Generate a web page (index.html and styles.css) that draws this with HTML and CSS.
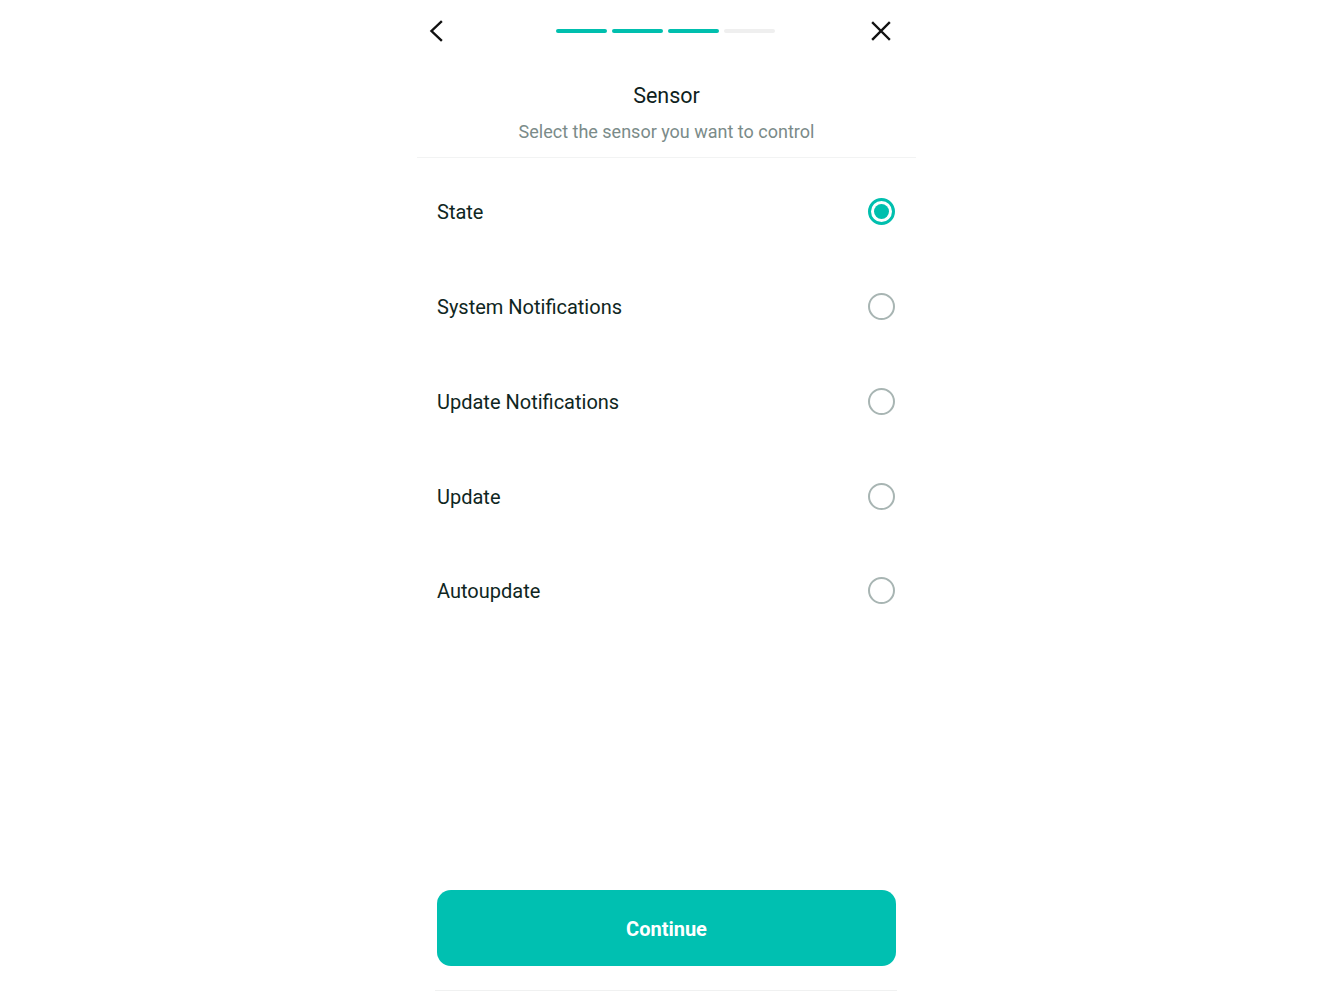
FILE: index.html
```html
<!DOCTYPE html>
<html lang="en">
<head>
<meta charset="utf-8">
<title>Sensor</title>
<link rel="stylesheet" href="styles.css">
</head>
<body>
<div class="screen">
  <header class="topbar">
    <button class="icon-btn" aria-label="Back">
      <svg width="24" height="24" viewBox="0 0 24 24"><path d="M13 3 L3.5 12 L13 21" fill="none" stroke="#111" stroke-width="2.4" stroke-linecap="square"/></svg>
    </button>
    <div class="progress">
      <span class="seg on"></span>
      <span class="seg on"></span>
      <span class="seg on"></span>
      <span class="seg"></span>
    </div>
    <button class="icon-btn" aria-label="Close">
      <svg width="24" height="24" viewBox="0 0 24 24"><path d="M4 4 L20 20 M20 4 L4 20" fill="none" stroke="#111" stroke-width="2.4" stroke-linecap="square"/></svg>
    </button>
  </header>

  <div class="heading">
    <h1 class="title">Sensor</h1>
    <p class="subtitle">Select the sensor you want to control</p>
  </div>

  <ul class="options">
    <li class="option"><span class="label">State</span><span class="radio checked"></span></li>
    <li class="option"><span class="label">System Notifications</span><span class="radio"></span></li>
    <li class="option"><span class="label">Update Notifications</span><span class="radio"></span></li>
    <li class="option"><span class="label">Update</span><span class="radio"></span></li>
    <li class="option"><span class="label">Autoupdate</span><span class="radio"></span></li>
  </ul>

  <footer class="footer">
    <button class="continue">Continue</button>
    <div class="bottom-line"></div>
  </footer>
</div>
</body>
</html>
```

FILE: styles.css
```css
* { box-sizing: border-box; }

html, body {
  margin: 0;
  padding: 0;
  background: #ffffff;
  font-family: Roboto, "Noto Sans", "Liberation Sans", sans-serif;
  color: #0f2622;
}

.screen {
  width: 499px;
  height: 1000px;
  margin: 0 auto;
  display: flex;
  flex-direction: column;
}

.topbar {
  height: 62px;
  padding: 0 23px 0 11px;
  display: flex;
  align-items: center;
  justify-content: space-between;
}

.icon-btn {
  width: 24px;
  height: 24px;
  padding: 0;
  border: 0;
  background: none;
  display: flex;
  align-items: center;
  justify-content: center;
}

.progress {
  display: flex;
  gap: 5px;
  margin-left: 10px;
}

.seg {
  width: 51px;
  height: 4px;
  border-radius: 2px;
  background: #efefef;
}

.seg.on { background: #00bfae; }

.heading {
  text-align: center;
  padding-top: 20px;
  padding-bottom: 13px;
  border-bottom: 1px solid #f2f3f3;
}

.title {
  margin: 0;
  font-size: 21.5px;
  font-weight: 400;
  line-height: 28px;
  color: #0f1f1d;
}

.subtitle {
  margin: 10px 0 0;
  font-size: 18px;
  line-height: 24px;
  color: #7b8b89;
}

.options {
  list-style: none;
  margin: 0;
  padding: 7px 21px 0 20px;
}

.option {
  height: 94.75px;
  display: flex;
  align-items: center;
  justify-content: space-between;
}

.label {
  font-size: 20px;
  line-height: 24px;
  color: #0f2622;
}

.radio {
  width: 27px;
  height: 27px;
  border-radius: 50%;
  border: 2.5px solid #a8b5b3;
  margin-top: -1px;
  display: flex;
  align-items: center;
  justify-content: center;
}

.radio.checked {
  border: 3px solid #00bfae;
}

.radio.checked::after {
  content: "";
  width: 15px;
  height: 15px;
  border-radius: 50%;
  background: #00bfae;
}

.footer {
  margin-top: auto;
  padding: 0 19px 9px 18px;
  display: flex;
  flex-direction: column;
  align-items: stretch;
}

.continue {
  margin: 0 1px 0 2px;
  height: 76px;
  border: 0;
  border-radius: 14px;
  background: #00c0b1;
  color: #ffffff;
  font-family: Roboto, "Noto Sans", "Liberation Sans", sans-serif;
  font-size: 20px;
  font-weight: 700;
  padding-top: 2px;
}

.bottom-line {
  margin-top: 24px;
  height: 1px;
  background: #f0f1f1;
}
```
